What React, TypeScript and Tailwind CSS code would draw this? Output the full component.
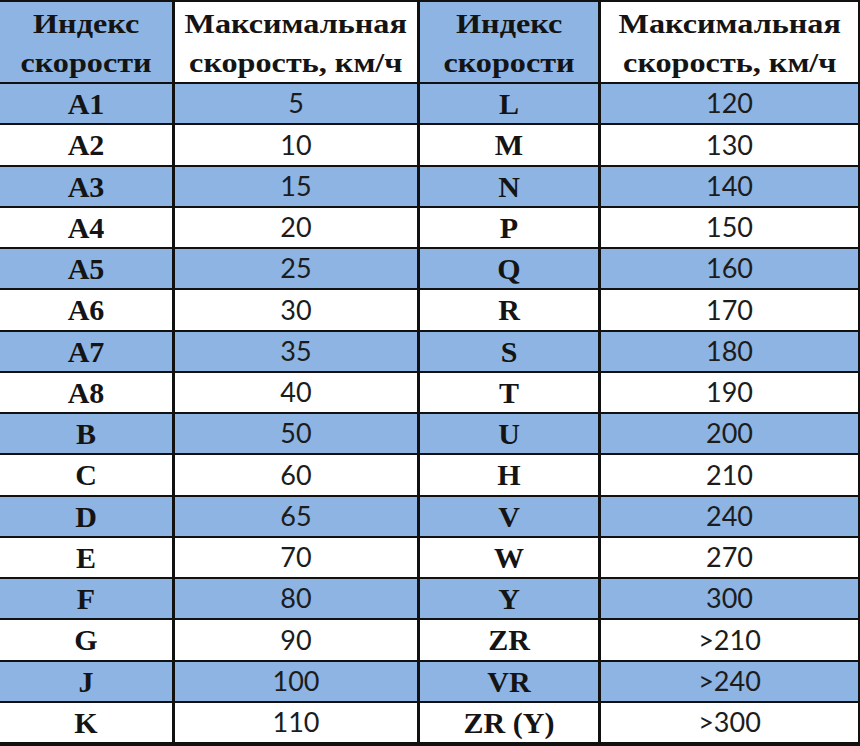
const rows: [string, string, string, string][] = [
  ["A1", "5", "L", "120"],
  ["A2", "10", "M", "130"],
  ["A3", "15", "N", "140"],
  ["A4", "20", "P", "150"],
  ["A5", "25", "Q", "160"],
  ["A6", "30", "R", "170"],
  ["A7", "35", "S", "180"],
  ["A8", "40", "T", "190"],
  ["B", "50", "U", "200"],
  ["C", "60", "H", "210"],
  ["D", "65", "V", "240"],
  ["E", "70", "W", "270"],
  ["F", "80", "Y", "300"],
  ["G", "90", "ZR", ">210"],
  ["J", "100", "VR", ">240"],
  ["K", "110", "ZR (Y)", ">300"],
];

const serif = "font-['Liberation_Serif',serif]";
const sans = "font-['Lato',sans-serif]";

function HeadCell({ top, bottom, blue }: { top: string; bottom: string; blue?: boolean }) {
  return (
    <div
      className={`flex flex-col items-center justify-center pt-[2px] ${serif} font-bold text-[28px] leading-[39px] text-[#141414] ${
        blue ? "bg-[#8db4e2]" : "bg-white"
      }`}
    >
      <span className="inline-block scale-x-[1.15]">{top}</span>
      <span className="inline-block scale-x-[1.15]">{bottom}</span>
    </div>
  );
}

export default function App() {
  return (
    <div className="w-[860px] h-[746px] bg-[#111] pt-[2px] pb-[4px] pr-[2px]">
      <div className="grid h-full grid-cols-[172px_242px_178px_1fr] grid-rows-[80px_repeat(16,minmax(0,1fr))] gap-x-[3px] gap-y-[2px]">
        <HeadCell top="Индекс" bottom="скорости" blue />
        <HeadCell top="Максимальная" bottom="скорость, км/ч" />
        <HeadCell top="Индекс" bottom="скорости" blue />
        <HeadCell top="Максимальная" bottom="скорость, км/ч" />

        {rows.map((r, i) => {
          const bg = i % 2 === 0 ? "bg-[#8db4e2]" : "bg-white";
          return [
            <div key={`a${i}`} className={`${bg} flex items-center justify-center ${serif} font-bold text-[30px] text-[#141414]`}>
              {r[0]}
            </div>,
            <div key={`b${i}`} className={`${bg} flex items-center justify-center ${sans} text-[27px] text-[#1c1c1c]`}>
              {r[1]}
            </div>,
            <div key={`c${i}`} className={`${bg} flex items-center justify-center ${serif} font-bold text-[30px] text-[#141414]`}>
              {r[2]}
            </div>,
            <div key={`d${i}`} className={`${bg} flex items-center justify-center ${sans} text-[27px] text-[#1c1c1c]`}>
              {r[3]}
            </div>,
          ];
        })}
      </div>
    </div>
  );
}
